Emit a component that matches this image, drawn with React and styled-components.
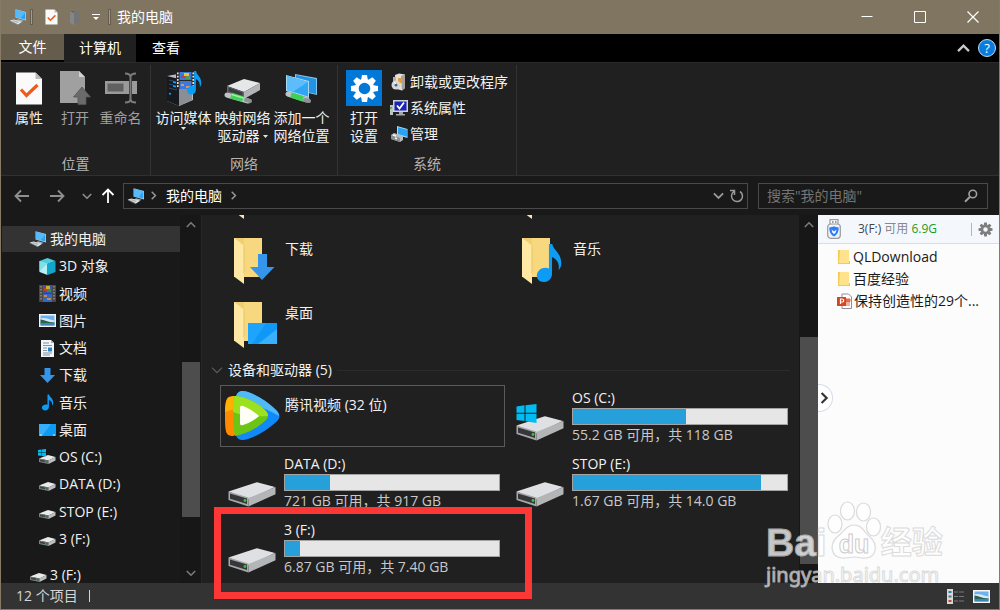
import styled, { createGlobalStyle, css } from "styled-components";

const GlobalStyle = createGlobalStyle`
  * {
    box-sizing: border-box;
  }
  body {
    margin: 0;
    background: #191919;
  }
  body, button, input {
    font-family: "Open Sans", "Noto Sans CJK SC", sans-serif;
    font-size: 14px;
    line-height: 18px;
  }
  button {
    margin: 0;
    padding: 0;
    border: none;
    background: none;
    color: inherit;
  }
  a {
    color: inherit;
    text-decoration: none;
  }
  ul {
    margin: 0;
    padding: 0;
    list-style: none;
  }
  svg {
    display: block;
    flex: none;
  }
`;

/* ---------- icons ---------- */

const PcIcon = ({ size = 18 }) => (
  <svg width={size} height={size} viewBox="0 0 18 18">
    <path d="M6.5 1.2 17 4v8.6L6.5 9.4z" fill="#9fd4f5" />
    <path d="M7.2 2.1 16.3 4.6v7L7.2 8.9z" fill="#2ba3f2" />
    <path d="m7.2 2.1 9.1 2.5-4.6 5.6-4.5-1.3z" fill="#57bbfa" />
    <path d="m9 11.2 5.6 1.5-3.2 1.8-5-1.4z" fill="#aeb6bb" />
    <path d="m.8 12.6 3.8-1.2 8.2 2.6-3.8 2.4z" fill="#e4e8ea" />
    <path d="m2.8 12.8 1.8-.6 5.6 1.9-1.6.8z" fill="#a9afb3" />
    <path d="M.8 12.6 9 16.4v.9L.8 13.3z" fill="#8c9296" />
  </svg>
);

const CheckDocIcon = ({ width = 28, height = 33 }) => (
  <svg width={width} height={height} viewBox="0 0 28 33">
    <path d="M1 .5h19.5L27 7v25.5H1z" fill="#fafafa" />
    <path d="M20.5.5V7H27z" fill="#b9b9b9" />
    <path d="m6 17.5 5.5 6L22.5 13" fill="none" stroke="#ee5a1b" strokeWidth="3.2" />
  </svg>
);

const OpenDocIcon = () => (
  <svg width="32" height="36" viewBox="0 0 32 36">
    <path d="M1 1h19l6 6v26H1z" fill="#a0a0a0" />
    <path d="M20 1v6h6z" fill="#d2d2d2" />
    <path d="M23 17 31.5 27H27v7.5h-8V27h-4.5z" fill="#6a6a6a" stroke="#565656" strokeWidth=".8" />
  </svg>
);

const RenameIcon = () => (
  <svg width="34" height="34" viewBox="0 0 34 34">
    <path d="M1 10h24v13H1zM28 10h5v13h-5z" fill="#9a9a9a" />
    <path d="M3.5 12.5h16v8h-16z" fill="#606060" />
    <path d="M21 2.5c3 0 5.5.8 5.5 3.5v22c0 2.5-2.5 3.5-5.5 3.5M32 2.5c-3 0-5.5.8-5.5 3.5M32 31.5c-3 0-5.5-1-5.5-3.5" fill="none" stroke="#7b7b7b" strokeWidth="2" />
  </svg>
);

const FilmStrip = () => (
  <svg width="17" height="17" viewBox="0 0 17 17">
    <path d="M0 0h17v17H0z" fill="#484848" />
    <path d="M4 0h9v8H4z" fill="#2f55b5" />
    <path d="M4 9h9v8H4z" fill="#3566c4" />
    <path d="M5 3h3v3H5z" fill="#b8402e" />
    <path d="M7 1h4v3H7z" fill="#d8a830" />
    <path d="M8 4h4v3H8z" fill="#3f8a45" />
    <path d="M5 10h3v2H5zM8 13h4v2H8z" fill="#c08a50" />
    <path d="M2 1v15M15 1v15" stroke="#8d8d8d" strokeWidth="1.5" strokeDasharray="1.5 1.5" />
  </svg>
);

const NotePath = () => (
  <path
    d="M9 0h2.2c.3 3.5 6.8 5.6 5.6 12.6-.3 1-.9 2-1.6 2.6.8-4-1-6.4-4.2-7.7v9.700c0 2.7-2.4 4.8-5.4 4.8C3 22 1.2 20.5 1.2 18.4c0-2.7 2.6-4.6 5.6-4.6.8 0 1.5.1 2.2.4z"
    fill="#0c9bf5"
  />
);

const NoteIcon = () => (
  <svg width="13" height="17" viewBox="0 0 18 22">
    <NotePath />
  </svg>
);

const MediaIcon = () => (
  <svg width="36" height="36" viewBox="0 0 36 36">
    <path d="m1 6 11-2 15 2v24l-14 6L1 31z" fill="#b9bdc2" />
    <path d="m1 6 12 3v27L1 31z" fill="#16191e" />
    <path d="m13 9 13-3v24l-13 6z" fill="#8b8f95" />
    <path d="m3 10 8 2M3 14l8 2M3 18l8 2" stroke="#2c4a66" strokeWidth="1.2" />
    <path d="m7 12 3 .8M7 16l3 .8M3 23.500l2 .5" stroke="#18a3ff" strokeWidth="1.6" />
    <path d="M10 2h19v17H10z" fill="#262626" />
    <path d="M13.500 2h12v8h-12zM13.500 11h12v8h-12z" fill="#3d78dd" />
    <path d="M15 5h4v3h-4z" fill="#c7432e" />
    <path d="M18 3h5v3h-5z" fill="#ecc23a" />
    <path d="M20 6h4v3h-4z" fill="#4fa04f" />
    <path d="M15 14h3v2h-3zM20 16h4v2h-4z" fill="#d89a5c" />
    <path d="M11.800 2.500v16M27.200 2.500v16" stroke="#e6e6e6" strokeWidth="1.600" strokeDasharray="1.800 1.400" />
    <g transform="translate(20 1) scale(.9 1.080)">
      <NotePath />
    </g>
  </svg>
);

const NetDriveIcon = () => (
  <svg width="38" height="36" viewBox="0 0 38 36">
    <path d="m3 16 17-7 16 4-16 9z" fill="#e6e7e8" />
    <path d="m3 16 17 6v7L3 22z" fill="#64676a" />
    <path d="m20 22 16-9v7l-16 9z" fill="#b2b5b8" />
    <path d="m4.5 17.5 14 5v3.5l-14-4.5z" fill="#3a3c3f" />
    <path d="m3 25 21 6" stroke="#bfc3c4" strokeWidth="5" strokeLinecap="round" />
    <path d="m7 25.5 12 3.7" stroke="#3ed152" strokeWidth="5.5" />
    <path d="m7.5 24.5 12 3.5" stroke="#9df0a2" strokeWidth="1.5" />
    <path d="m22 30 4 1" stroke="#8e9292" strokeWidth="4" strokeLinecap="round" />
  </svg>
);

const NetPlaceIcon = () => (
  <svg width="34" height="32" viewBox="0 0 34 32">
    <path d="m10 2 22 4v17l-22-5z" fill="#7fc6ee" />
    <path d="m11 3 20 4v15l-20-5z" fill="#2492e0" />
    <path d="m1 3 23 6v17L1 19z" fill="#a5d9f5" />
    <path d="m2 4 21 6v14.5L2 18z" fill="#2fa7f5" />
    <path d="m2 4 21 6L8 19.800 2 18z" fill="#5dbdfb" />
    <path d="m3 22 19 6" stroke="#bfc3c4" strokeWidth="5" strokeLinecap="round" />
    <path d="m6 23 12 4" stroke="#3ed152" strokeWidth="5.5" />
    <path d="m20 28 4 1" stroke="#8e9292" strokeWidth="4" strokeLinecap="round" />
  </svg>
);

const teeth = [0, 45, 90, 135, 180, 225, 270, 315];

const Gear = ({ size, color, hole, ring }) => (
  <svg width={size} height={size} viewBox="-15 -15 30 30">
    {teeth.map((a) => (
      <path key={a} d="M-3.600-8-2.600-14h5.200l1 6z" fill={color} transform={`rotate(${a})`} />
    ))}
    <circle r={ring} fill="none" stroke={color} strokeWidth={hole} />
  </svg>
);

const UninstallIcon = () => (
  <svg width="18" height="18" viewBox="0 0 18 18">
    <path d="m5 2 4-1.500 6 1V15l-3 2.500-7-2z" fill="#e3e1dc" />
    <path d="m11 3 4-1.500V15l-3 2.500z" fill="#a6a29a" />
    <path d="M8 5h4v5H8z" fill="#ec9a38" />
    <path d="M3 4h3v5H3z" fill="#b2b2b2" />
    <circle cx="6" cy="12" r="4.5" fill="#d3d8da" />
    <circle cx="6" cy="12" r="1.5" fill="#56606a" />
    <path d="m4 9 2 2" stroke="#fff" />
  </svg>
);

const SystemIcon = () => (
  <svg width="18" height="18" viewBox="0 0 18 18">
    <path d="M0 6h3v10H0z" fill="#bfc2c4" />
    <path d="M0 8h2v2H0z" fill="#42c542" />
    <path d="M3 1h15v12H3z" fill="#cfd2d8" />
    <path d="M4.5 2.5h12v9h-12z" fill="#1b22b8" />
    <path d="m7 6.5 2.5 3 4.500-6" fill="none" stroke="#fff" strokeWidth="1.8" />
    <path d="M9 13h4v2h2v1.500H6V15h3z" fill="#a5a8ab" />
  </svg>
);

const ManageIcon = () => (
  <svg width="18" height="18" viewBox="0 0 18 18">
    <path d="m7 1 10.500 3v9L7 10z" fill="#a9d9f3" />
    <path d="m8 2.200 9 2.600v7L8 9z" fill="#2ba3f2" />
    <path d="m1 10 3-2 9 3v4l-3 2-9-3z" fill="#b8bbbd" />
    <path d="m1 10 9 3v4l-9-3z" fill="#8b8e90" />
    <path d="m3 10 3 1M5 13l2 .8" stroke="#f5f5f5" strokeWidth="1.5" />
  </svg>
);

const CubeIcon = () => (
  <svg width="17" height="17" viewBox="0 0 17 17">
    <path d="m8.500 0 8 3-8 3-8-3z" fill="#4ccde0" />
    <path d="m.5 3 8 2.500V17l-8-3z" fill="#b5f1f4" />
    <path d="m16.500 3-8 2.500V17l8-3z" fill="#12a6cb" />
    <path d="m.5 3 8 2.500-8 8z" fill="#7fe0e8" />
  </svg>
);

const PhotoIcon = () => (
  <svg width="17" height="13" viewBox="0 0 17 13">
    <path d="M0 0h17v13H0z" fill="#f5f5f5" />
    <path d="M1.5 1.5h14v10h-14z" fill="#6db2ee" />
    <path d="M1.5 4.5c4-1.500 7 .5 14 2v2h-14z" fill="#d4ebf7" />
    <path d="M1.5 5.5c4 0 7 3 14 3v1h-14z" fill="#2c6150" />
    <path d="M1.5 9h14v2.500h-14z" fill="#3d86b4" />
  </svg>
);

const DocIcon = () => (
  <svg width="13" height="17" viewBox="0 0 13 17">
    <path d="M0 0h10l3 3v14H0z" fill="#f3f6f8" />
    <path d="M10 0v3h3z" fill="#a8b2ba" />
    <path d="M2 3h6M2 5.500h9M2 8h4M2 10.500h4M2 13h9M2 15h7" stroke="#7a95a8" />
    <path d="M7 7.500h4v4H7z" fill="#2887c9" />
  </svg>
);

const DownIcon = () => (
  <svg width="15" height="15" viewBox="0 0 15 15">
    <path d="M4.500 0h6v7H15l-7.500 8L0 7h4.500z" fill="#3595ea" />
  </svg>
);

const DesktopIcon = () => (
  <svg width="17" height="12" viewBox="0 0 17 12">
    <path d="M0 0h17v12H0z" fill="#0c9bf5" />
    <path d="M0 0h12L3 12H0z" fill="#36aefc" />
    <path d="M1 11h2M14 11h2" stroke="#d2eeff" />
  </svg>
);

const WinLogo = () => (
  <path d="m0 2.500 8-1.200v7.400H0zM9 1.200 20 0v8.700H9zM0 9.700h8V17l-8-1zM9 9.700h11V19L9 17.300z" fill="#00bcf2" />
);

const SmallDrive = ({ system }) => (
  <svg width="18" height="16" viewBox="0 0 18 16">
    <path d="m1 9.500 9-3.500 7.500 2-7 3.500z" fill="#e9eaec" />
    <path d="m1 9.500 9.500 2V15L1 13z" fill="#7d8083" />
    <path d="m2 10.500 7.500 1.600v1.600L2 12.200z" fill="#3f4244" />
    <path d="m10.500 11.500 7-3.500v3.500l-7 3.500z" fill="#bcbfc2" />
    <path d="M7 12.200h1.500v1.200H7z" fill="#38c24a" />
    {system && (
      <g transform="scale(.4)">
        <WinLogo />
      </g>
    )}
  </svg>
);

const DriveIcon = ({ system }) => (
  <svg width="48" height="48" viewBox="0 0 48 48">
    <path d="M.5 32.500 28 23.500q1-.3 2 0L47 28 20.500 40.500z" fill="#dfe0e3" />
    <path d="M20.500 39 47.500 28v7.200L20.500 47.500z" fill="#b4b5b7" />
    <path d="m.5 32.500 20 6v9L.5 41z" fill="#a5a7a9" />
    <path d="m2 34.500 17 5v5.500L2 39.800z" fill="#35373a" />
    <circle cx="17" cy="41.5" r="1.4" fill="#2ecc35" />
    {system && (
      <g transform="translate(.5 11)">
        <WinLogo />
      </g>
    )}
  </svg>
);

const FolderIcon = ({ children }) => (
  <svg width="48" height="48" viewBox="0 0 48 48">
    <path d="M4 1h28v39H4z" fill="#f0cf70" />
    <path d="M14 1h18v39H14z" fill="#f7d87e" />
    <path d="m4 1 10 7.500V47L4 39.500z" fill="#ffe8a4" />
    <path d="M13.500 8.500h1V34l-1 4z" fill="#e8c465" />
    {children}
  </svg>
);

const TencentIcon = () => (
  <svg width="56" height="52" viewBox="0 0 56 52">
    <path d="M10 6C2 6 1 9 1 26s1 20 8 20l7-3V8z" fill="#ff8a00" />
    <path d="M4 8c-2 3-3 8-3 14l12-4 3-10-6-2z" fill="#ffb300" />
    <path d="M12 7c1-6 6-7 12-5 9 3 20 10 27 17 6 5 6 9 0 14-8 7-18 13-27 16-6 2-11 1-12-4z" fill="#1189f8" />
    <path d="M12 7c1-6 6-7 12-5 9 3 20 10 27 17 3 3 4 5 4 7-12-7-25-12-43-14z" fill="#52b9f8" />
    <path d="M10 6c9 0 21 5 31 14 4 4 4 7 0 11-9 8-20 13-30 15-2-10-3-30-1-40z" fill="#6cc414" />
    <path d="M10 6c9 0 21 5 31 14 2 2 3 4 3 6-12 1-25 0-35-4 0-6 0-11 1-16z" fill="#9be120" />
    <path d="M16 18c0-2 1-2.500 3-2 6 2 10 5 15 9 1 1 1 1.500 0 2-5 4-9 6-15 8-2 .7-3 0-3-2z" fill="#fdfff5" />
  </svg>
);

const Chevron = ({ dir = "right", size = 10, color = "#9b9b9b", weight = 1.6 }) => {
  const turn = { right: 0, down: 90, left: 180, up: 270 }[dir];
  return (
    <svg width={size} height={size} viewBox="0 0 10 10">
      <path d="m3 .8 4.200 4.200L3 9.200" fill="none" stroke={color} strokeWidth={weight} transform={`rotate(${turn} 5 5)`} />
    </svg>
  );
};

const ArrowIcon = ({ turn = 0, color }) => (
  <svg width="16" height="16" viewBox="0 0 16 16">
    <path d="M15 8H1.500M7 2.500 1.500 8 7 13.500" fill="none" stroke={color} strokeWidth="1.8" transform={`rotate(${turn} 8 8)`} />
  </svg>
);

const Caret = () => (
  <svg width="5" height="3" viewBox="0 0 5 3">
    <path d="M0 0h5L2.500 3z" fill="#e6e6e6" />
  </svg>
);

const UsbIcon = () => (
  <svg width="16" height="20" viewBox="0 0 16 20">
    <path d="M4 .7h8V6H4z" fill="#fff" stroke="#9a9a9a" strokeWidth="1.2" />
    <path d="M6 3h1.500M9 3h1.500" stroke="#777" strokeWidth="1.5" />
    <rect x="1.700" y="5" width="12.600" height="14.300" rx="3" fill="#eef3f9" stroke="#9a9a9a" strokeWidth="1.2" />
    <path d="M3.300 8.500C5 8.500 7 8 8 7.300c1 .7 3 1.200 4.700 1.200 0 4-1 7-4.700 9-3.700-2-4.700-5-4.700-9z" fill="#2d7df6" />
    <path d="m5.500 10.500 2.500 2 2.500-2-1 3.200L8 15l-1.500-1.300z" fill="#fff" />
  </svg>
);

const TinyFolder = () => (
  <svg width="14" height="16" viewBox="0 0 14 16">
    <path d="M1 1h11v14H1z" fill="#ffe38c" />
    <path d="M1 15V1h2l-1 14z" fill="#f6cb55" />
    <path d="M12 12h1v3H1v-.8h11z" fill="#efc24c" />
  </svg>
);

const PptIcon = () => (
  <svg width="15" height="16" viewBox="0 0 15 16">
    <path d="M5 1h6.500l3 3v11.500H5z" fill="#fff" stroke="#8f8f8f" />
    <path d="M9 6h4v2.500H9zM9 10h4M9 12h4" fill="#ef7250" stroke="#e8603c" />
    <path d="M0 4h9v9H0z" fill="#d24726" />
    <path d="M3.500 11V6h1.700a1.400 1.400 0 0 1 0 3H3.500" fill="none" stroke="#fff" strokeWidth="1.2" />
  </svg>
);

/* ---------- window frame ---------- */

const Window = styled.div`
  position: relative;
  display: flex;
  flex-direction: column;
  height: 100vh;
  overflow: hidden;
  border: 1px solid #877b66;
  border-top: none;
  background: #191919;
  color: #f2f2f2;
`;

const TitleBar = styled.header`
  display: flex;
  align-items: center;
  height: 34px;
  flex: none;
  padding-left: 8px;
  background: #7f7561;
`;

const QuickButton = styled.button`
  display: flex;
  align-items: center;
  justify-content: center;
  width: ${({ $w }) => $w}px;
  height: 20px;
`;

const TitleRule = styled.span`
  width: 3px;
  height: 16px;
  border: 1px solid #675e4d;
  background: #a59b86;
`;

const Title = styled.h1`
  flex: 1;
  margin: 0 0 0 6px;
  font-size: 14px;
  font-weight: 400;
  color: #fff;
`;

const WindowButton = styled.button`
  display: flex;
  align-items: center;
  justify-content: center;
  width: 53px;
  height: 34px;
`;

const TabBar = styled.nav`
  display: flex;
  height: 28px;
  flex: none;
  background: #000;
`;

const Tab = styled.button`
  width: ${({ $w }) => $w}px;
  height: 28px;
  color: #fff;
  ${({ $file }) =>
    $file &&
    css`
      height: 26px;
      background: #665c4b;
    `}
  ${({ $active }) =>
    $active &&
    css`
      background: #202020;
    `}
`;

const TabTools = styled.div`
  display: flex;
  align-items: center;
  gap: 8px;
  margin-left: auto;
  padding-right: 3px;
`;

const Help = styled.button`
  width: 18px;
  height: 18px;
  border: 1px solid #b8ddf8;
  border-radius: 50%;
  background: #0b7bdc;
  color: #fff;
  font-size: 13px;
  line-height: 16px;
`;

/* ---------- ribbon ---------- */

const Ribbon = styled.section`
  display: flex;
  flex: none;
  height: 114px;
  border-top: 1px solid #2b2b2b;
  border-bottom: 1px solid #303030;
  background: #202020;
`;

const Group = styled.div`
  display: flex;
  flex-direction: column;
  margin-top: 2px;
  border-right: 1px solid #333;
`;

const GroupBody = styled.div`
  display: flex;
  flex: 1;
  padding: 5px ${({ $end }) => $end}px 0 ${({ $start }) => $start}px;
`;

const GroupName = styled.div`
  height: 20px;
  text-align: center;
  color: #b4b4b4;
`;

const BigButton = styled.button`
  display: flex;
  flex-direction: column;
  align-items: center;
  width: ${({ $w }) => $w}px;
  color: ${({ disabled }) => (disabled ? "#a0a0a0" : "#f2f2f2")};
  white-space: nowrap;
`;

const BigIcon = styled.span`
  display: flex;
  align-items: center;
  justify-content: center;
  height: 36px;
  margin-bottom: 3px;
`;

const Line = styled.span`
  display: flex;
  align-items: center;
  gap: 3px;
`;

const SettingsTile = styled.span`
  display: grid;
  place-items: center;
  width: 36px;
  height: 36px;
  background: #0078d7;
`;

const SmallList = styled.div`
  display: flex;
  flex-direction: column;
  gap: 8px;
  padding: 3px 0 0 5px;
`;

const SmallButton = styled.button`
  display: flex;
  align-items: center;
  gap: 2px;
  color: #f2f2f2;
`;

/* ---------- address row ---------- */

const AddressRow = styled.div`
  display: flex;
  align-items: center;
  flex: none;
  height: 39px;
  padding: 0 11px;
`;

const NavButton = styled.button`
  display: grid;
  place-items: center;
  width: ${({ $w }) => $w}px;
  height: 26px;
`;

const AddressBox = styled.div`
  display: flex;
  align-items: center;
  flex: 1;
  height: 26px;
  margin-right: 10px;
  padding: 0 1px 0 3px;
  border: 1px solid #4a4a4a;
`;

const Crumb = styled.button`
  padding: 0 7px 0 5px;
  color: #fff;
`;

const AddressTools = styled.div`
  display: flex;
  margin-left: auto;
`;

const SearchBox = styled.label`
  display: flex;
  align-items: center;
  width: 230px;
  height: 26px;
  padding: 0 9px 0 8px;
  border: 1px solid #4a4a4a;
`;

const SearchInput = styled.input`
  flex: 1;
  min-width: 0;
  padding: 0;
  border: none;
  outline: none;
  background: transparent;
  color: #ddd;

  &::placeholder {
    color: #747474;
    opacity: 1;
  }
`;

/* ---------- body ---------- */

const Body = styled.div`
  display: flex;
  flex: 1;
  min-height: 0;
`;

const Sidebar = styled.nav`
  display: flex;
  flex-direction: column;
  width: 179px;
  flex: none;
  padding-top: 11px;
`;

const Tree = styled.ul`
  display: grid;
  grid-auto-rows: 1fr;
  flex: 1;
`;

const TreeTail = styled.div`
  height: 21px;
  margin-top: 9px;
  overflow: hidden;
`;

const TreeLink = styled.a`
  display: flex;
  align-items: center;
  height: 26px;
  gap: 2px;
  padding-left: ${({ $depth }) => 26 + $depth * 9}px;
  margin-left: 1px;
  background: ${({ $current }) => ($current ? "#333" : "transparent")};
`;

const TreeIcon = styled.span`
  display: grid;
  place-items: center;
  width: 20px;
`;

const Scrollbar = styled.div`
  display: flex;
  flex-direction: column;
  align-items: center;
  justify-content: space-between;
  width: ${({ $w }) => $w}px;
  flex: none;
  padding: 5px 0;
  background: #171717;
`;

const Track = styled.div`
  display: flex;
  flex-direction: column;
  flex: 1;
  width: 18px;
  padding-top: ${({ $start }) => $start}px;
  padding-bottom: ${({ $end }) => $end}px;
`;

const Thumb = styled.div`
  flex: 1;
  background: #4d4d4d;
`;

const Files = styled.main`
  display: flex;
  flex-direction: column;
  flex: 1;
  min-width: 0;
  padding-left: 18px;
  border-left: 1px solid #262626;
  background: #202020;
`;

const Grid = styled.div`
  display: grid;
  grid-template-columns: 288px 288px;
`;

const Folder = styled.a`
  display: flex;
  gap: 7px;
  height: 64px;
  padding-left: 10px;
`;

const FolderName = styled.span`
  padding-top: 3px;
`;

const FolderGrid = styled(Grid)`
  padding-top: 17px;
`;

/* bottom edge of the row that is scrolled out of view */
const PeekGrid = styled(Grid)`
  align-content: end;
  height: 5px;
  overflow: hidden;

  ${Folder} {
    height: 48px;
  }
`;

const SectionTitle = styled.h2`
  display: flex;
  align-items: center;
  gap: 5px;
  height: 20px;
  margin: -4px 0 5px -9px;
  font-size: 14px;
  font-weight: 400;

  &::after {
    content: "";
    flex: 1;
    height: 1px;
    margin-right: 9px;
    background: #2b2b2b;
  }
`;

const Drive = styled.a`
  position: relative;
  display: flex;
  gap: 8px;
  height: 62px;
  margin-bottom: 4px;
  padding-left: 8px;
`;

const AppTile = styled(Drive)`
  gap: 5px;
  width: 285px;
  padding: 4px 3px;
  border: 1px solid #5a5a5a;
`;

const AppName = styled.span`
  padding-top: 6px;
`;

const DriveArt = styled.span`
  padding-top: 8px;
`;

const DriveInfo = styled.span`
  display: flex;
  flex-direction: column;
  gap: 1px;
  width: 216px;
  padding-top: 4px;
  white-space: nowrap;
`;

const Meter = styled.span`
  display: block;
  height: 17px;
  border: 1px solid #a3a3a3;
  background: #e6e6e6;
`;

const MeterFill = styled.span`
  display: block;
  height: 100%;
  background: #26a0da;
`;

const Usage = styled.span`
  color: #c8c8c8;
`;

const Highlight = styled.span`
  position: absolute;
  top: -10px;
  left: -6px;
  width: 318px;
  height: 92px;
  border: 7px solid #fd3636;
  z-index: 2;
`;

/* ---------- usb panel ---------- */

const UsbPanel = styled.aside`
  position: relative;
  width: 181px;
  flex: none;
  background: #fcfcfc;
  color: #1a1a1a;
`;

const UsbHeader = styled.header`
  display: flex;
  align-items: center;
  height: 29px;
  padding: 0 6px 0 8px;
  border-bottom: 1px solid #d5dfea;
  background: #f4f8fd;
  font-size: 12px;
`;

const UsbName = styled.span`
  margin-left: 16px;
  color: #444;
`;

const UsbFree = styled.span`
  flex: 1;
  margin-left: 3px;
  color: #888;

  b {
    font-weight: 400;
    color: #1e9a1e;
  }
`;

const UsbTools = styled.button`
  display: flex;
  align-items: center;
  padding-left: 6px;
  border-left: 1px solid #b5b5b5;
  height: 13px;
`;

const UsbList = styled.ul`
  padding: 2px 0 0 19px;
`;

const UsbLink = styled.a`
  display: flex;
  align-items: center;
  gap: 2px;
  height: 22px;
  white-space: nowrap;
`;

const PanelHandle = styled.button`
  position: absolute;
  top: 169px;
  left: 0;
  display: flex;
  align-items: center;
  width: 15px;
  height: 28px;
  border: 1px solid #d5dce9;
  border-left: none;
  border-radius: 0 14px 14px 0;
  background: #fff;
`;

/* ---------- status bar ---------- */

const StatusBar = styled.footer`
  display: flex;
  align-items: center;
  flex: none;
  height: 26px;
  padding: 0 9px 0 15px;
  background: #333;
  color: #d6d6d6;
`;

const StatusRule = styled.span`
  width: 1px;
  height: 12px;
  margin-left: 11px;
  background: #d6d6d6;
`;

const ViewButtons = styled.div`
  display: flex;
  align-items: center;
  gap: 9px;
  margin-left: auto;
`;

/* ---------- watermark ---------- */

const Watermark = styled.div`
  position: absolute;
  right: 43px;
  bottom: 20px;
  width: 190px;
  opacity: 0.75;
  color: #fff;
  white-space: nowrap;
  pointer-events: none;
  z-index: 3;
  -webkit-text-stroke: 1px #d0d0d0;
`;

const MarkTop = styled.div`
  display: flex;
  align-items: flex-end;
  font-family: "Liberation Sans", "Noto Sans CJK SC", sans-serif;
  font-size: 39px;
  font-weight: 700;
  line-height: 36px;
`;

const MarkCjk = styled.span`
  font-size: 31px;
`;

const MarkUrl = styled.div`
  font-family: "Noto Sans", sans-serif;
  font-size: 20px;
  line-height: 28px;
`;

const Paw = () => (
  <svg width="54" height="60" viewBox="0 0 54 60">
    <g fill="#fff" stroke="#d0d0d0" strokeWidth="1.2">
      <ellipse cx="8" cy="23" rx="7" ry="9" />
      <ellipse cx="20.5" cy="10" rx="7" ry="9" />
      <ellipse cx="36.5" cy="11" rx="7" ry="9" />
      <ellipse cx="46.5" cy="26" rx="7" ry="9" />
      <path d="M27 24c8 0 10 7 16 12 8 7 7 20-4 21-5 .5-8-1-12-1s-7 1.500-12 1C4 56 2 44 10 36c7-5 9-12 17-12z" />
    </g>
    <text x="27" y="52" textAnchor="middle" fontFamily="Liberation Sans" fontSize="25" fontWeight="700" fill="#fff" stroke="#bdbdbd">
      du
    </text>
  </svg>
);

const treeItems = [
  { name: "我的电脑", icon: <PcIcon />, depth: 0, current: true },
  { name: "3D 对象", icon: <CubeIcon /> },
  { name: "视频", icon: <FilmStrip /> },
  { name: "图片", icon: <PhotoIcon /> },
  { name: "文档", icon: <DocIcon /> },
  { name: "下载", icon: <DownIcon /> },
  { name: "音乐", icon: <NoteIcon /> },
  { name: "桌面", icon: <DesktopIcon /> },
  { name: "OS (C:)", icon: <SmallDrive system /> },
  { name: "DATA (D:)", icon: <SmallDrive /> },
  { name: "STOP (E:)", icon: <SmallDrive /> },
  { name: "3 (F:)", icon: <SmallDrive /> },
];

const drives = [
  { name: "OS (C:)", usage: "55.2 GB 可用，共 118 GB", used: 53, system: true },
  { name: "DATA (D:)", usage: "721 GB 可用，共 917 GB", used: 21 },
  { name: "STOP (E:)", usage: "1.67 GB 可用，共 14.0 GB", used: 88 },
  { name: "3 (F:)", usage: "6.87 GB 可用，共 7.40 GB", used: 7, marked: true },
];

const App = () => {
  return (
    <Window>
      <GlobalStyle />

      <TitleBar>
        <QuickButton $w={18} aria-label="电脑">
          <PcIcon />
        </QuickButton>
        <QuickButton $w={9} as="span">
          <TitleRule />
        </QuickButton>
        <QuickButton $w={31} aria-label="属性">
          <CheckDocIcon width={13} height={16} />
        </QuickButton>
        <QuickButton $w={16} aria-label="新建文件夹">
          <svg width="12" height="15" viewBox="0 0 12 15">
            <path d="M1 1h8v12H1z" fill="#5f5f5f" />
            <path d="m1 1 4 2v12l-4-2z" fill="#858585" />
            <path d="M5 1h5v7h1.500v5H5z" fill="#747474" />
          </svg>
        </QuickButton>
        <QuickButton $w={25} aria-label="自定义快速访问工具栏">
          <svg width="8" height="6" viewBox="0 0 8 6">
            <path d="M0 .5h8" stroke="#fff" />
            <path d="M1 3h6L4 6z" fill="#fff" />
          </svg>
        </QuickButton>
        <TitleRule />
        <Title>我的电脑</Title>
        <WindowButton aria-label="最小化">
          <svg width="12" height="12" viewBox="0 0 12 12">
            <path d="M.5 5.500h11" stroke="#fff" />
          </svg>
        </WindowButton>
        <WindowButton aria-label="最大化">
          <svg width="12" height="12" viewBox="0 0 12 12">
            <path d="M.5.5h11v11H.5z" fill="none" stroke="#fff" />
          </svg>
        </WindowButton>
        <WindowButton aria-label="关闭">
          <svg width="12" height="12" viewBox="0 0 12 12">
            <path d="m.5.5 11 11m0-11-11 11" stroke="#fff" strokeWidth="1.2" />
          </svg>
        </WindowButton>
      </TitleBar>

      <TabBar>
        <Tab $w={63} $file>
          文件
        </Tab>
        <Tab $w={72} $active>
          计算机
        </Tab>
        <Tab $w={60}>查看</Tab>
        <TabTools>
          <button aria-label="折叠功能区">
            <Chevron dir="up" size={13} color="#c8c8c8" weight={1.8} />
          </button>
          <Help aria-label="帮助">?</Help>
        </TabTools>
      </TabBar>

      <Ribbon>
        <Group>
          <GroupBody $start={5} $end={7}>
            <BigButton $w={46}>
              <BigIcon>
                <CheckDocIcon />
              </BigIcon>
              属性
            </BigButton>
            <BigButton $w={46} disabled>
              <BigIcon>
                <OpenDocIcon />
              </BigIcon>
              打开
            </BigButton>
            <BigButton $w={45} disabled>
              <BigIcon>
                <RenameIcon />
              </BigIcon>
              重命名
            </BigButton>
          </GroupBody>
          <GroupName>位置</GroupName>
        </Group>
        <Group>
          <GroupBody $start={3} $end={6}>
            <BigButton $w={59}>
              <BigIcon>
                <MediaIcon />
              </BigIcon>
              访问媒体
              <Caret />
            </BigButton>
            <BigButton $w={59}>
              <BigIcon>
                <NetDriveIcon />
              </BigIcon>
              <Line>映射网络</Line>
              <Line>
                驱动器 <Caret />
              </Line>
            </BigButton>
            <BigButton $w={59}>
              <BigIcon>
                <NetPlaceIcon />
              </BigIcon>
              <Line>添加一个</Line>
              <Line>网络位置</Line>
            </BigButton>
          </GroupBody>
          <GroupName>网络</GroupName>
        </Group>
        <Group>
          <GroupBody $start={5} $end={8}>
            <BigButton $w={42}>
              <BigIcon>
                <SettingsTile>
                  <Gear size={29} color="#fff" ring={8} hole={4} />
                </SettingsTile>
              </BigIcon>
              <Line>打开</Line>
              <Line>设置</Line>
            </BigButton>
            <SmallList>
              <SmallButton>
                <UninstallIcon />
                卸载或更改程序
              </SmallButton>
              <SmallButton>
                <SystemIcon />
                系统属性
              </SmallButton>
              <SmallButton>
                <ManageIcon />
                管理
              </SmallButton>
            </SmallList>
          </GroupBody>
          <GroupName>系统</GroupName>
        </Group>
      </Ribbon>

      <AddressRow>
        <NavButton $w={20} aria-label="后退">
          <ArrowIcon color="#8f8f8f" />
        </NavButton>
        <NavButton $w={50} aria-label="前进">
          <ArrowIcon color="#8f8f8f" turn={180} />
        </NavButton>
        <NavButton $w={10} aria-label="最近浏览的位置">
          <Chevron dir="down" size={10} color="#8f8f8f" />
        </NavButton>
        <NavButton $w={31} aria-label="上移">
          <ArrowIcon color="#fff" turn={90} />
        </NavButton>
        <AddressBox>
          <PcIcon />
          <NavButton $w={16} aria-label="展开">
            <Chevron size={9} />
          </NavButton>
          <Crumb>我的电脑</Crumb>
          <Chevron size={9} />
          <AddressTools>
            <NavButton $w={20} aria-label="以前的位置">
              <Chevron dir="down" size={11} />
            </NavButton>
            <NavButton $w={18} aria-label="刷新">
              <svg width="14" height="14" viewBox="0 0 14 14">
                <path d="M9.500 2.200A5.500 5.500 0 1 1 4 2.500M9.500 6V1.500H14" fill="none" stroke="#9b9b9b" strokeWidth="1.5" transform="matrix(-1 0 0 1 14 0)" />
              </svg>
            </NavButton>
          </AddressTools>
        </AddressBox>
        <SearchBox>
          <SearchInput type="text" aria-label="搜索" placeholder={'搜索"我的电脑"'} />
          <svg width="14" height="14" viewBox="0 0 14 14">
            <circle cx="8.8" cy="5" r="3.8" fill="none" stroke="#a0a0a0" strokeWidth="1.6" />
            <path d="m6 7.800-5 5" stroke="#a0a0a0" strokeWidth="2" />
          </svg>
        </SearchBox>
      </AddressRow>

      <Body>
        <Sidebar>
          <Tree>
            {treeItems.map(({ name, icon, depth = 1, current }) => (
              <li key={name}>
                <TreeLink href="#" $depth={depth} $current={current}>
                  <TreeIcon>{icon}</TreeIcon>
                  {name}
                </TreeLink>
              </li>
            ))}
          </Tree>
          <TreeTail>
            <TreeLink href="#" $depth={0}>
              <TreeIcon>
                <SmallDrive />
              </TreeIcon>
              3 (F:)
            </TreeLink>
          </TreeTail>
        </Sidebar>
        <Scrollbar $w={21}>
          <Chevron dir="up" size={10} color="#7b7b7b" />
          <Track $start={132} $end={51}>
            <Thumb />
          </Track>
          <Chevron dir="down" size={10} color="#7b7b7b" />
        </Scrollbar>

        <Files>
          <PeekGrid>
            <Folder as="div">
              <FolderIcon />
            </Folder>
            <Folder as="div">
              <FolderIcon />
            </Folder>
          </PeekGrid>
          <FolderGrid>
            <Folder href="#">
              <FolderIcon>
                <path d="M28 17h9v13h7.500L32 43 20 30h8z" fill="#3595ea" />
              </FolderIcon>
              <FolderName>下载</FolderName>
            </Folder>
            <Folder href="#">
              <FolderIcon>
                <g transform="translate(17 7) scale(1.550 1.730)">
                  <NotePath />
                </g>
              </FolderIcon>
              <FolderName>音乐</FolderName>
            </Folder>
            <Folder href="#">
              <FolderIcon>
                <path d="M18 22h29v21H18z" fill="#0f98f6" />
                <path d="M18 22h18L22 43h-4z" fill="#1ea4fc" />
                <path d="M47 28v15H28z" fill="#3aaffc" />
              </FolderIcon>
              <FolderName>桌面</FolderName>
            </Folder>
          </FolderGrid>
          <SectionTitle>
            <Chevron dir="down" size={12} color="#5c5c5c" weight={1} />
            设备和驱动器 (5)
          </SectionTitle>
          <Grid>
            <AppTile href="#">
              <TencentIcon />
              <AppName>腾讯视频 (32 位)</AppName>
            </AppTile>
            {drives.map(({ name, usage, used, system, marked }) => (
              <Drive href="#" key={name}>
                <DriveArt>
                  <DriveIcon system={system} />
                </DriveArt>
                <DriveInfo>
                  {name}
                  <Meter role="progressbar" aria-label={name} aria-valuenow={used}>
                    <MeterFill style={{ width: `${used}%` }} />
                  </Meter>
                  <Usage>{usage}</Usage>
                </DriveInfo>
                {marked && <Highlight />}
              </Drive>
            ))}
          </Grid>
        </Files>
        <Scrollbar $w={19}>
          <Chevron dir="up" size={10} color="#7b7b7b" />
          <Track $start={107} $end={14}>
            <Thumb />
          </Track>
        </Scrollbar>

        <UsbPanel>
          <UsbHeader>
            <UsbIcon />
            <UsbName>3(F:)</UsbName>
            <UsbFree>
              可用 <b>6.9G</b>
            </UsbFree>
            <UsbTools aria-label="设置">
              <Gear size={15} color="#7d7d7d" ring={7} hole={5} />
            </UsbTools>
          </UsbHeader>
          <UsbList>
            <li>
              <UsbLink href="#">
                <TinyFolder />
                QLDownload
              </UsbLink>
            </li>
            <li>
              <UsbLink href="#">
                <TinyFolder />
                百度经验
              </UsbLink>
            </li>
            <li>
              <UsbLink href="#">
                <PptIcon />
                保持创造性的29个...
              </UsbLink>
            </li>
          </UsbList>
          <PanelHandle aria-label="收起面板">
            <Chevron size={12} color="#333" weight={1.8} />
          </PanelHandle>
        </UsbPanel>
      </Body>

      <StatusBar>
        12 个项目
        <StatusRule />
        <ViewButtons>
          <button aria-label="详细信息">
            <svg width="17" height="15" viewBox="0 0 17 15">
              <path d="M0 0h6v15H0z" fill="#d8d8d8" />
              <path d="M1.500 2h3v2h-3zM1.500 6.500h3v2h-3z" fill="#3a7d9a" />
              <path d="M1.500 11h3v2h-3z" fill="#d2452c" />
              <path d="M7 3h4M12 3h5M7 7.500h4M12 7.500h5M7 12h4M12 12h5" stroke="#777" />
            </svg>
          </button>
          <button aria-label="大缩略图">
            <PhotoIcon />
          </button>
        </ViewButtons>
      </StatusBar>

      <Watermark>
        <MarkTop>
          Bai
          <Paw />
          <MarkCjk>经验</MarkCjk>
        </MarkTop>
        <MarkUrl>jingyan.baidu.com</MarkUrl>
      </Watermark>
    </Window>
  );
};

export default App;
